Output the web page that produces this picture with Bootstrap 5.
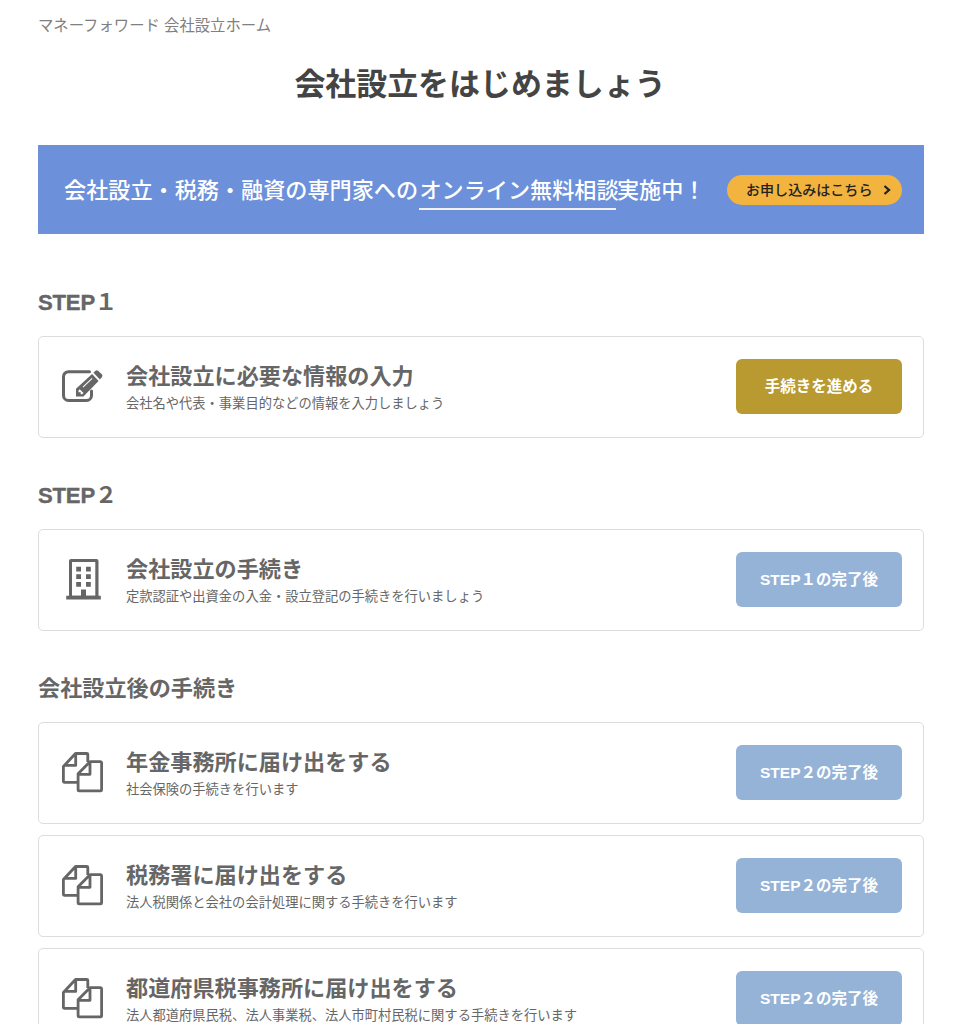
<!DOCTYPE html>
<html lang="ja">
<head>
<meta charset="utf-8">
<meta name="viewport" content="width=device-width, initial-scale=1">
<title>マネーフォワード 会社設立</title>
<link href="https://cdn.jsdelivr.net/npm/bootstrap@5.3.0/dist/css/bootstrap.min.css" rel="stylesheet">
<style>
body{font-family:"Liberation Sans","Noto Sans CJK JP",sans-serif;color:#666;white-space:nowrap;height:1024px;overflow:hidden}
.page{padding:0 32px 0 38px}
.crumb{font-size:15.35px;line-height:20px;padding-top:16px;color:#808080}
.page-title{font-size:30.95px;line-height:40px;color:#444;margin:29px 0 40px;padding-right:2px}
.consult{height:89px;background:#6c90da;color:#fff;padding:0 22px 0 26px}
.consult-text{font-size:22.13px;line-height:30px;font-weight:500;padding-top:6px}
.consult-text u{text-decoration:none;display:inline-block;height:34px;border-bottom:2px solid #f5f2ee;vertical-align:top;width:197px;margin:0 .6px 0 1.4px}
.btn-apply{width:175px;height:30px;background:#f2b33f!important;color:#222!important;font-size:14.05px;font-weight:500;line-height:30px;padding:0 10px 0 19px;border:0}
.step-title{font-size:22.13px;line-height:30px;margin:54px 0 18px}
.latin{-webkit-text-stroke:.35px currentColor;letter-spacing:-.2px}
.step-card{height:102px;border:1px solid #ddd;border-radius:5px;padding:0 21px 0 22px}
.step-card + .step-card{margin-top:11px}
.step-card + .step-title{margin-top:43px}
.step-icon{width:42px;height:42px;margin:0 23px 2px 0;flex:none}
.task-text{padding-top:2px}
.task-name{font-size:22.13px;line-height:30px;margin:0}
.task-note{font-size:13.27px;line-height:20px;margin:2px 0 0}
.btn-task{width:166px;height:55px;margin-bottom:1px;border:0;border-radius:6px;font-size:15.5px;font-weight:700;color:#fff!important;padding:0;opacity:1!important}
.btn-go{background:#b89a30!important}
.btn-wait{background:#94b3d7!important}
</style>
</head>
<body>
<svg width="0" height="0" class="position-absolute">
  <symbol id="icon-edit" viewBox="0 0 42 42">
    <path d="M28.500 6.700H7.500A5 5 0 0 0 2.500 11.700V30.500A5 5 0 0 0 7.500 35.500H25.500A5 5 0 0 0 30.500 30.500V26" fill="none" stroke="#666" stroke-width="3" stroke-linecap="round"/>
    <path fill="#666" fill-rule="evenodd" d="M15 31.500V23.800L31.100 9.100L37.600 16.100L22.400 31.500ZM17.500 25.600V27.200H19.700V29.300H21.100L22.500 27.900L18.700 24.300ZM21.600 21.800L22.300 22.500L31.500 13.700L30.800 13Z"/>
    <path fill="#666" d="M32.500 7.700L34.500 5.700Q35.800 4.600 37.100 5.700L41 9.500Q42 10.700 41 12L38.900 14.500Z"/>
  </symbol>
  <symbol id="icon-building" viewBox="0 0 42 42">
    <path fill="#666" fill-rule="evenodd" d="M8 40.500V3Q8 1 10 1H35.500Q37.500 1 37.500 3V40.500ZM11 4.100V37.700H20V31.500H25V37.700H34.300V4.100Z"/>
    <path fill="#666" d="M5.200 37.700H39.800V41.500H5.200zM15.200 8.700h4.800v4.800h-4.800zM25 8.700h4.800v4.800H25zM15.200 16.300h4.800v4.800h-4.800zM25 16.300h4.800v4.800H25zM15.200 24h4.800v4.800h-4.800zM25 24h4.800v4.800H25z"/>
  </symbol>
  <symbol id="icon-files" viewBox="0 0 42 42">
    <g fill="none" stroke="#666" stroke-width="2.800" stroke-linejoin="round">
      <path d="M17.300 31.400H3.500Q2.400 31.400 2.400 30.300V15.500L14.500 2.500H25.800Q26.800 2.500 26.800 3.500V11M14.700 3V14.400H3"/>
      <path d="M29 10.700H39.600Q40.600 10.700 40.600 11.800V38.800Q40.600 39.900 39.600 39.900H18.200Q17.100 39.900 17.100 38.800V22.800L29 10.700ZM29 11.500V23.300H17.500"/>
    </g>
  </symbol>
</svg>
<main class="page">
  <nav class="crumb">マネーフォワード 会社設立ホーム</nav>
  <h1 class="page-title text-center fw-bold">会社設立をはじめましょう</h1>
  <section class="consult d-flex align-items-center justify-content-between">
    <div class="consult-text">会社設立・税務・融資の専門家への<u>オンライン無料相談</u>実施中！</div>
    <a href="#" class="btn btn-apply rounded-pill d-flex align-items-center justify-content-between">お申し込みはこちら
      <svg width="10" height="12" viewBox="0 0 10 12"><path d="M2.500 2L7 6L2.500 10" fill="none" stroke="#222" stroke-width="2.300"/></svg></a>
  </section>

  <h2 class="step-title fw-bold"><span class="latin">STEP</span>１</h2>
  <div class="step-card d-flex align-items-center">
    <svg class="step-icon"><use href="#icon-edit"/></svg>
    <div class="task-text flex-grow-1"><h3 class="task-name fw-bold">会社設立に必要な情報の入力</h3><p class="task-note">会社名や代表・事業目的などの情報を入力しましょう</p></div>
    <button class="btn btn-task btn-go">手続きを進める</button>
  </div>

  <h2 class="step-title fw-bold"><span class="latin">STEP</span>２</h2>
  <div class="step-card d-flex align-items-center">
    <svg class="step-icon"><use href="#icon-building"/></svg>
    <div class="task-text flex-grow-1"><h3 class="task-name fw-bold">会社設立の手続き</h3><p class="task-note">定款認証や出資金の入金・設立登記の手続きを行いましょう</p></div>
    <button class="btn btn-task btn-wait" disabled>STEP１の完了後</button>
  </div>

  <h2 class="step-title fw-bold">会社設立後の手続き</h2>
  <div class="step-card d-flex align-items-center">
    <svg class="step-icon"><use href="#icon-files"/></svg>
    <div class="task-text flex-grow-1"><h3 class="task-name fw-bold">年金事務所に届け出をする</h3><p class="task-note">社会保険の手続きを行います</p></div>
    <button class="btn btn-task btn-wait" disabled>STEP２の完了後</button>
  </div>
  <div class="step-card d-flex align-items-center">
    <svg class="step-icon"><use href="#icon-files"/></svg>
    <div class="task-text flex-grow-1"><h3 class="task-name fw-bold">税務署に届け出をする</h3><p class="task-note">法人税関係と会社の会計処理に関する手続きを行います</p></div>
    <button class="btn btn-task btn-wait" disabled>STEP２の完了後</button>
  </div>
  <div class="step-card d-flex align-items-center">
    <svg class="step-icon"><use href="#icon-files"/></svg>
    <div class="task-text flex-grow-1"><h3 class="task-name fw-bold">都道府県税事務所に届け出をする</h3><p class="task-note">法人都道府県民税、法人事業税、法人市町村民税に関する手続きを行います</p></div>
    <button class="btn btn-task btn-wait" disabled>STEP２の完了後</button>
  </div>
</main>
<script src="https://cdn.jsdelivr.net/npm/bootstrap@5.3.0/dist/js/bootstrap.bundle.min.js"></script>
</body>
</html>
